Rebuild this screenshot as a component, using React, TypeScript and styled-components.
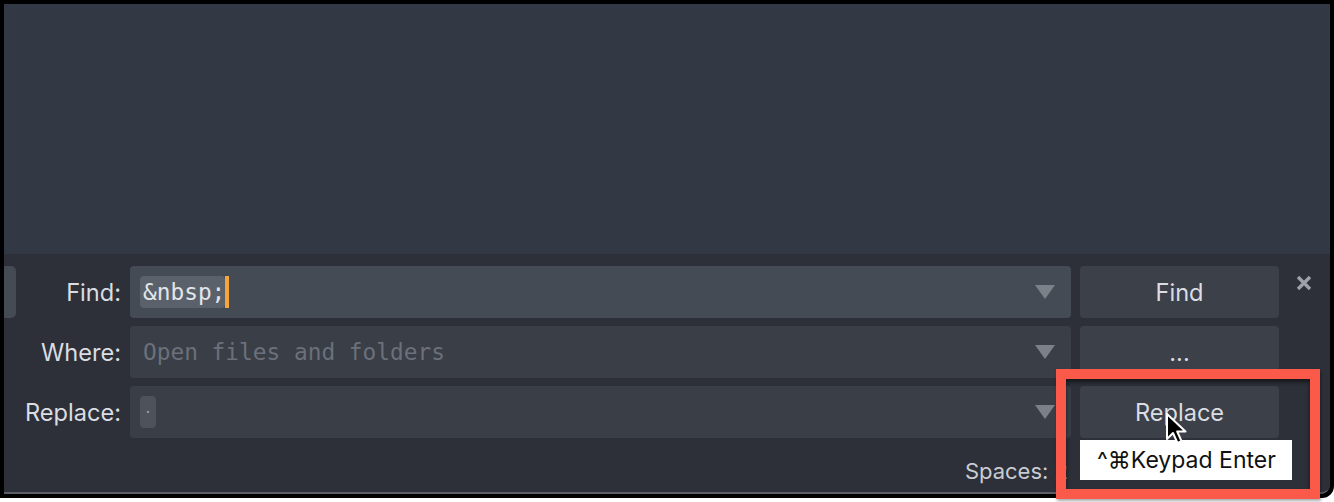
import React from "react";
import styled, { createGlobalStyle } from "styled-components";

const GlobalStyle = createGlobalStyle`
  html, body {
    margin: 0;
    padding: 0;
    background: #ffffff;
  }
  * {
    box-sizing: border-box;
  }
`;

const uiFont = `Inter, "Liberation Sans", "DejaVu Sans", sans-serif`;
const monoFont = `"DejaVu Sans Mono", "Liberation Mono", monospace`;

const Stage = styled.div`
  position: relative;
  width: 1334px;
  height: 502px;
  overflow: hidden;
  background: #ffffff;
`;

const Frame = styled.div`
  width: 1334px;
  height: 498px;
  padding: 4px;
  background: #000000;
  border-bottom-right-radius: 12px;
`;

const Window = styled.div`
  display: flex;
  flex-direction: column;
  height: 100%;
  background: #2d3038;
  border-bottom: 2px solid #5b5e64;
  border-bottom-right-radius: 9px;
  overflow: hidden;
`;

const Editor = styled.div`
  height: 250px;
  background: #323944;
`;

const FindPanel = styled.div`
  flex: 1;
  display: flex;
  flex-direction: column;
  padding-top: 12px;
  background: #2d3038;
  font-family: ${uiFont};
`;

const Rows = styled.div`
  display: grid;
  grid-template-columns: 12px 114px 1fr 208px 51px;
  grid-auto-rows: 52px;
  row-gap: 8px;
`;

const Stub = styled.div<{ $visible?: boolean }>`
  background: ${(p) => (p.$visible ? "#454b55" : "transparent")};
  border-radius: 0 5px 5px 0;
`;

const Label = styled.div`
  display: flex;
  align-items: center;
  justify-content: flex-end;
  padding-right: 9px;
  font-size: 23.6px;
  color: #dadde2;
`;

const Field = styled.div<{ $active?: boolean }>`
  position: relative;
  display: flex;
  align-items: center;
  padding: 0 10px;
  border-radius: 4px;
  background: ${(p) => (p.$active ? "#454b55" : "#3a3e47")};
  font-family: ${monoFont};
  font-size: 22.8px;
`;

const Selected = styled.span`
  display: inline-flex;
  align-items: center;
  height: 32px;
  padding: 0 0 0 3px;
  border-radius: 4px;
  background: #5b616b;
  color: #e2e5e9;
`;

const Caret = styled.span`
  width: 4px;
  height: 32px;
  background: #f4a63a;
`;

const Placeholder = styled.span`
  padding-left: 3px;
  color: #6b707a;
`;

const SpaceToken = styled.span`
  display: inline-flex;
  align-items: center;
  justify-content: center;
  width: 16px;
  height: 32px;
  border-radius: 4px;
  background: #4d525b;
  color: #9ca0a7;
  font-size: 14px;
`;

const Arrow = styled.span`
  position: absolute;
  right: 16px;
  top: 50%;
  margin-top: -7px;
  width: 0;
  height: 0;
  border-left: 10px solid transparent;
  border-right: 10px solid transparent;
  border-top: 14px solid #7c8189;
`;

const ButtonCell = styled.div`
  display: flex;
  padding-left: 9px;
`;

const Button = styled.div`
  flex: 1;
  display: flex;
  align-items: center;
  justify-content: center;
  border-radius: 4px;
  background: #3c4049;
  color: #dadde2;
  font-size: 23.6px;
`;

const CloseCell = styled.div`
  display: flex;
  justify-content: center;
  padding-top: 9px;
  padding-right: 2px;
`;

const StatusBar = styled.div`
  display: flex;
  justify-content: flex-end;
  padding: 20px 262px 0 0;
  font-size: 22px;
  color: #c9ccd2;
`;

const Highlight = styled.div`
  position: absolute;
  left: 1056px;
  top: 369px;
  width: 264px;
  height: 130px;
  border: 10px solid #fb5a4b;
  box-shadow: 1px 2px 3px rgba(0, 0, 0, 0.35), inset 0 3px 4px rgba(0, 0, 0, 0.55);
`;

const Tooltip = styled.div`
  position: absolute;
  left: 1080px;
  top: 440px;
  width: 212px;
  height: 40px;
  display: flex;
  align-items: center;
  padding-left: 17px;
  background: #ffffff;
  color: #111111;
  font-family: Inter, "DejaVu Sans", sans-serif;
  font-size: 23px;
  white-space: nowrap;
`;

const Pointer = styled.svg`
  position: absolute;
  left: 1165px;
  top: 412px;
`;

const CloseIcon = () => (
  <svg width="16" height="16" viewBox="0 0 16 16">
    <path d="M2 2 L14 14 M14 2 L2 14" stroke="#9da1a8" strokeWidth="3.4" strokeLinecap="butt" />
  </svg>
);

export default function App() {
  return (
    <Stage>
      <GlobalStyle />
      <Frame>
        <Window>
          <Editor />
          <FindPanel>
            <Rows>
              <Stub $visible />
              <Label>Find:</Label>
              <Field $active>
                <Selected>&amp;nbsp;</Selected>
                <Caret />
                <Arrow />
              </Field>
              <ButtonCell>
                <Button>Find</Button>
              </ButtonCell>
              <CloseCell>
                <CloseIcon />
              </CloseCell>

              <Stub />
              <Label>Where:</Label>
              <Field>
                <Placeholder>Open files and folders</Placeholder>
                <Arrow />
              </Field>
              <ButtonCell>
                <Button>...</Button>
              </ButtonCell>
              <div />

              <Stub />
              <Label>Replace:</Label>
              <Field>
                <SpaceToken>·</SpaceToken>
                <Arrow />
              </Field>
              <ButtonCell>
                <Button>Replace</Button>
              </ButtonCell>
              <div />
            </Rows>
            <StatusBar>Spaces: 2</StatusBar>
          </FindPanel>
        </Window>
      </Frame>
      <Highlight />
      <Tooltip>^⌘Keypad Enter</Tooltip>
      <Pointer width="26" height="36" viewBox="0 0 26 36">
        <path
          d="M2 2 L2 27 L8 21 L12.5 31 L16.5 29.2 L12.2 19.5 L20.5 19.5 Z"
          fill="#000000"
          stroke="#ffffff"
          strokeWidth="2"
          strokeLinejoin="round"
        />
      </Pointer>
    </Stage>
  );
}
